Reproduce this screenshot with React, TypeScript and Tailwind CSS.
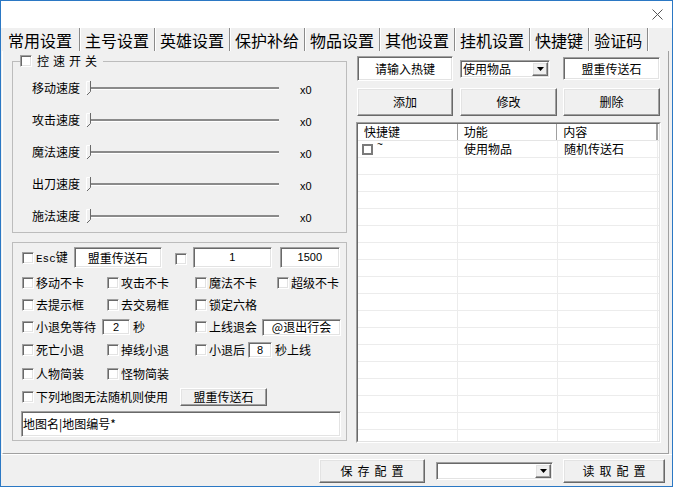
import React from "react";

const sunken =
  "bg-white border border-t-[#a0a0a0] border-l-[#a0a0a0] border-r-white border-b-white shadow-[inset_1px_1px_0_#696969,inset_-1px_-1px_0_#e3e3e3]";
const raised =
  "bg-[#f0f0f0] border border-t-white border-l-white border-r-[#696969] border-b-[#696969] shadow-[inset_-1px_-1px_0_#a0a0a0,inset_1px_1px_0_#e3e3e3]";

const tabs = ["常用设置", "主号设置", "英雄设置", "保护补给", "物品设置", "其他设置", "挂机设置", "快捷键", "验证码"];
const speeds = ["移动速度", "攻击速度", "魔法速度", "出刀速度", "施法速度"];

function Check() {
  return <span className={"inline-block w-[12px] h-[12px] shrink-0 " + sunken} />;
}

function Opt({ label, w = "" }: { label: string; w?: string }) {
  return (
    <div className={"flex items-center shrink-0 " + w}>
      <Check />
      <span className="ml-[2px] text-[12px] leading-none whitespace-nowrap">{label}</span>
    </div>
  );
}

function Thumb() {
  return (
    <svg width="6" height="14" viewBox="0 0 6 14" className="absolute left-[-1px] top-[-1px]">
      <path d="M0 0H4V10L1 13H0Z" fill="#f0f0f0" />
      <path d="M0.5 13V0.5H4" stroke="#fff" fill="none" />
      <path d="M4.5 0V10.5L1 14" stroke="#696969" fill="none" />
    </svg>
  );
}

function Select({ value, w }: { value: string; w: string }) {
  return (
    <div className={"h-[18px] flex items-stretch p-[1px] " + sunken + " " + w}>
      <span className="flex-1 text-[12px] leading-none flex items-center pl-[1px]">{value}</span>
      <span className={"w-[16px] flex items-center justify-center " + raised}>
        <svg width="7" height="4" viewBox="0 0 7 4">
          <path d="M0 0H7L3.5 4Z" fill="#000" />
        </svg>
      </span>
    </div>
  );
}

export default function App() {
  return (
    <div className="w-[673px] h-[487px] border border-[#2b78c4] bg-[#f0f0f0] flex flex-col text-black font-['Noto_Sans_CJK_SC','Noto_Sans',sans-serif] overflow-hidden select-none">
      {/* title bar */}
      <div className="h-[27px] shrink-0 bg-white flex items-center justify-end pr-[9px]">
        <svg width="11" height="11" viewBox="0 0 11 11">
          <path d="M0.5 0.5L10.5 10.5M10.5 0.5L0.5 10.5" stroke="#555" strokeWidth="1" />
        </svg>
      </div>

      {/* tabs */}
      <div className="h-[23px] shrink-0 flex pl-[2px]">
        {tabs.map((t, i) => (
          <div
            key={t}
            className={
              "h-full flex items-center text-[16px] leading-none border-r border-r-[#8a8a8a] shadow-[1px_0_0_#fff] " +
              (i === 0 ? "pl-[5px] pr-[7px]" : "pl-[5px] pr-[5px]")
            }
          >
            {t}
          </div>
        ))}
      </div>

      {/* page */}
      <div className="h-[403px] shrink-0 ml-[1px] w-[667px] border-l border-l-white border-r border-r-[#a0a0a0] border-b border-b-[#a0a0a0] flex pl-[9px]">
        {/* left column */}
        <div className="w-[335px] flex flex-col">
          <div className="mt-[10px] h-[172px] relative border border-[#bcbcbc] pt-[10px] flex flex-col">
            <div className="absolute left-[7px] top-[-7px] flex items-center bg-[#f0f0f0] pr-[2px]">
              <Check />
              <span className="ml-[5px] text-[12px] leading-none tracking-[4px]">控速开关</span>
            </div>
            {speeds.map((s) => (
              <div key={s} className="h-[32px] flex items-center pl-[19px]">
                <span className="w-[48px] text-[12px] leading-none">{s}</span>
                <div className="ml-[7px] w-[192px] relative h-[12px] flex items-center">
                  <div className="h-[2px] w-full bg-[#8a8a8a] shadow-[0_1px_0_#fff]" />
                  <Thumb />
                </div>
                <span className="ml-[21px] mt-[5px] text-[11px] leading-none font-['Liberation_Sans',sans-serif]">x0</span>
              </div>
            ))}
          </div>

          <div className="mt-[9px] border border-[#bcbcbc] pl-[9px] pt-[4px] pb-[3px] flex flex-col">
            <div className="h-[21px] flex items-center">
              <Check />
              <span className="ml-[2px] text-[12px] leading-none whitespace-nowrap">
                <span className="font-['Liberation_Mono',monospace] text-[11px]">Esc</span>键
              </span>
              <div className={"ml-[6px] w-[88px] h-[21px] flex items-center justify-center text-[12px] leading-none " + sunken}>盟重传送石</div>
              <span className="ml-[13px]">
                <Check />
              </span>
              <div className={"ml-[6px] w-[79px] h-[21px] flex items-center justify-center text-[11px] leading-none font-['Liberation_Sans',sans-serif] " + sunken}>1</div>
              <div className={"ml-[8px] w-[60px] h-[21px] flex items-center justify-center text-[11px] leading-none font-['Liberation_Sans',sans-serif] " + sunken}>1500</div>
            </div>

            <div className="mt-[4px] h-[22px] flex items-center">
              <Opt label="移动不卡" w="w-[85px]" />
              <Opt label="攻击不卡" w="w-[88px]" />
              <Opt label="魔法不卡" w="w-[82px]" />
              <Opt label="超级不卡" />
            </div>
            <div className="h-[22px] flex items-center">
              <Opt label="去提示框" w="w-[85px]" />
              <Opt label="去交易框" w="w-[88px]" />
              <Opt label="锁定六格" />
            </div>
            <div className="h-[22px] flex items-center">
              <div className="w-[173px] flex items-center">
                <Opt label="小退免等待" />
                <div className={"ml-[6px] w-[28px] h-[16px] flex items-center justify-center text-[11px] leading-none font-['Liberation_Sans',sans-serif] " + sunken}>2</div>
                <span className="ml-[3px] text-[12px] leading-none">秒</span>
              </div>
              <Opt label="上线退会" />
              <div className={"ml-[5px] w-[79px] h-[17px] flex items-center justify-center text-[12px] leading-none " + sunken}>@退出行会</div>
            </div>
            <div className="h-[24px] flex items-center">
              <Opt label="死亡小退" w="w-[85px]" />
              <Opt label="掉线小退" w="w-[88px]" />
              <Opt label="小退后" />
              <div className={"ml-[3px] w-[24px] h-[16px] flex items-center justify-center text-[11px] leading-none font-['Liberation_Sans',sans-serif] " + sunken}>8</div>
              <span className="ml-[3px] text-[12px] leading-none">秒上线</span>
            </div>
            <div className="h-[23px] flex items-center">
              <Opt label="人物简装" w="w-[85px]" />
              <Opt label="怪物简装" />
            </div>
            <div className="h-[24px] flex items-center">
              <Opt label="下列地图无法随机则使用" />
              <div className={"ml-[12px] w-[87px] h-[18px] flex items-center justify-center text-[12px] leading-none " + raised}>盟重传送石</div>
            </div>
            <div className={"mt-[2px] -ml-[1px] w-[320px] h-[26px] flex items-center text-[12px] leading-none pl-[1px] " + sunken}>
              地图名|地图编号*
            </div>
          </div>
        </div>

        {/* right column */}
        <div className="ml-[9px] w-[305px] flex flex-col">
          <div className="mt-[5px] h-[25px] flex items-center">
            <div className={"ml-[1px] w-[96px] h-[25px] flex items-center justify-center text-[12px] leading-none " + sunken}>请输入热键</div>
            <Select value="使用物品" w="ml-[7px] w-[90px]" />
            <div className={"ml-[13px] w-[97px] h-[23px] flex items-center justify-center text-[12px] leading-none " + sunken}>盟重传送石</div>
          </div>
          <div className="mt-[7px] flex">
            {["添加", "修改", "删除"].map((b, i) => (
              <div
                key={b}
                className={
                  "h-[28px] flex items-center justify-center text-[12px] leading-none " +
                  raised +
                  (i === 0 ? " ml-[1px] w-[96px]" : i === 1 ? " ml-[7px] w-[97px]" : " ml-[6px] w-[97px]")
                }
              >
                {b}
              </div>
            ))}
          </div>
          <div className="mt-[6px] h-[321px] border border-t-[#a0a0a0] border-l-[#a0a0a0] border-r-white border-b-white">
            <div className="h-full bg-white border border-t-[#696969] border-l-[#696969] border-r-[#e3e3e3] border-b-[#e3e3e3] overflow-hidden flex flex-col">
              <div className="h-[17px] shrink-0 flex border-b border-b-[#e5e5e5]">
                {["快捷键", "功能", "内容"].map((h) => (
                  <div key={h} className="w-[100px] flex items-center pl-[6px] text-[12px] leading-none border-r border-r-[#a0a0a0] shadow-[1px_0_0_#fff]">
                    {h}
                  </div>
                ))}
                <div className="w-[2px] border-l border-l-[#a0a0a0]" />
              </div>
              {Array.from({ length: 18 }).map((_, r) => (
                <div key={r} className="h-[17px] shrink-0 flex border-b border-b-[#ececec]">
                  <div className="w-[100px] flex items-center border-r border-r-[#ececec]">
                    {r === 0 && (
                      <>
                        <span className="ml-[4px] w-[11px] h-[11px] border-2 border-[#7a7a7a] bg-white" />
                        <span className="ml-[4px] self-start mt-[-1px] text-[10px] leading-none font-['Liberation_Sans',sans-serif]">~</span>
                      </>
                    )}
                  </div>
                  <div className="w-[100px] flex items-center pl-[6px] text-[12px] leading-none border-r border-r-[#ececec]">
                    {r === 0 ? "使用物品" : ""}
                  </div>
                  <div className="w-[100px] flex items-center pl-[6px] text-[12px] leading-none border-r border-r-[#ececec]">
                    {r === 0 ? "随机传送石" : ""}
                  </div>
                </div>
              ))}
            </div>
          </div>
        </div>
      </div>

      {/* bottom bar */}
      <div className="h-[1px] shrink-0 bg-white" />
      <div className="flex-1 flex items-center pl-[318px]">
        <div className={"w-[106px] h-[24px] flex items-center justify-center text-[12px] leading-none tracking-[5px] pl-[5px] " + raised}>保存配置</div>
        <Select value="" w="ml-[11px] w-[117px]" />
        <div className={"ml-[10px] w-[102px] h-[24px] flex items-center justify-center text-[12px] leading-none tracking-[5px] pl-[5px] " + raised}>读取配置</div>
      </div>
    </div>
  );
}
